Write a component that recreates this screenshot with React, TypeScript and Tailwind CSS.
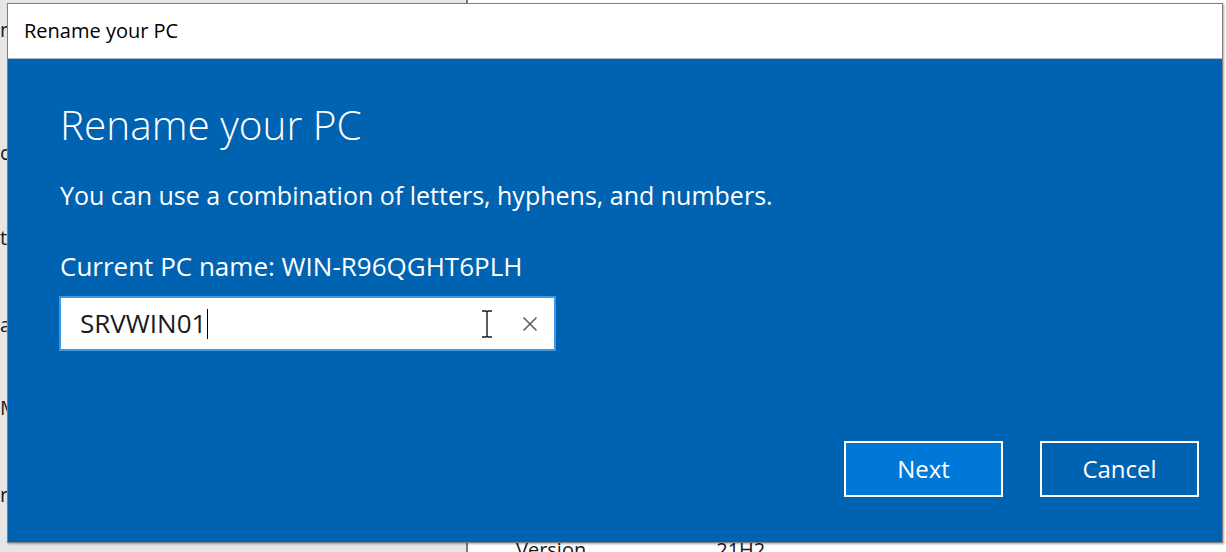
import React from "react";

const FONT = { fontFamily: "'Segoe UI', 'Open Sans', 'Noto Sans', sans-serif" };

function IBeam() {
  return (
    <svg width="14" height="28" viewBox="0 0 14 28" className="text-[#1a1a1a]">
      <path d="M2 1h3.5Q7 1 7 2.5V25.5Q7 27 5.5 27H2M12 1H8.5Q7 1 7 2.5M7 25.5Q7 27 8.5 27H12" fill="none" stroke="currentColor" strokeWidth="1.4" />
    </svg>
  );
}

function ClearX() {
  return (
    <svg width="16" height="16" viewBox="0 0 16 16">
      <path d="M1.5 1.5l13 13M14.5 1.5l-13 13" stroke="#5a5a5a" strokeWidth="1.5" />
    </svg>
  );
}

export default function App() {
  return (
    <div className="relative flex h-[552px] w-[1226px] overflow-hidden bg-white" style={FONT}>
      {/* settings window behind the dialog */}
      <aside className="flex w-[466px] flex-col bg-[#e6e6e6] pt-[18px] text-[20px] leading-[24px] text-[#1a1a1a]">
        <span className="h-[123px]">n</span>
        <span className="h-[85px]">c</span>
        <span className="h-[87px]">t</span>
        <span className="h-[83px]">a</span>
        <span className="h-[87px]">M</span>
        <span>r</span>
      </aside>
      <div className="w-[2px] bg-[#7a7a7a]" />
      <main className="flex flex-1 flex-col justify-end text-[20px] leading-[24px] text-[#1a1a1a]">
        <div className="-mb-[10px] flex gap-[130px] pl-[48px]">
          <span>Version</span>
          <span>21H2</span>
        </div>
      </main>

      {/* dialog */}
      <div className="absolute left-[7px] top-[3px] flex h-[540px] w-[1216px] flex-col border border-[#808080] shadow-[1px_1px_2px_rgba(0,0,0,0.35)]">
        <div className="flex h-[55px] items-center border-b border-[#a9bdd1] bg-white pl-[16px] text-[20px] text-black">
          Rename your PC
        </div>
        <div className="flex flex-1 flex-col bg-[#0063b1] pb-[45px] pl-[52px] pr-[23px] text-white">
          <h1 className="mt-[41px] text-[40.5px] font-light leading-[50px]">Rename your PC</h1>
          <p className="mt-[30px] text-[25px] leading-[30px]">
            You can use a combination of letters, hyphens, and numbers.
          </p>
          <p className="mt-[41px] text-[26px] leading-[30px]">Current PC name: WIN-R96QGHT6PLH</p>
          <div className="-ml-[1px] mt-[15px] flex h-[55px] w-[497px] items-center border-2 border-[#3b99e6] bg-white pl-[19px] pr-[16px] text-[26px] text-[#1a1a1a]">
            <span>SRVWIN01</span>
            <span className="ml-[1px] h-[30px] w-[1px] bg-black" />
            <span className="ml-auto mr-[28px] flex">
              <IBeam />
            </span>
            <ClearX />
          </div>
          <div className="mt-auto flex justify-end gap-[37px]">
            <button className="h-[56px] w-[159px] border-2 border-white bg-[#0078d7] text-[24px] text-white">
              Next
            </button>
            <button className="h-[56px] w-[159px] border-2 border-white bg-[#0063b1] text-[24px] text-white">
              Cancel
            </button>
          </div>
        </div>
      </div>
    </div>
  );
}
